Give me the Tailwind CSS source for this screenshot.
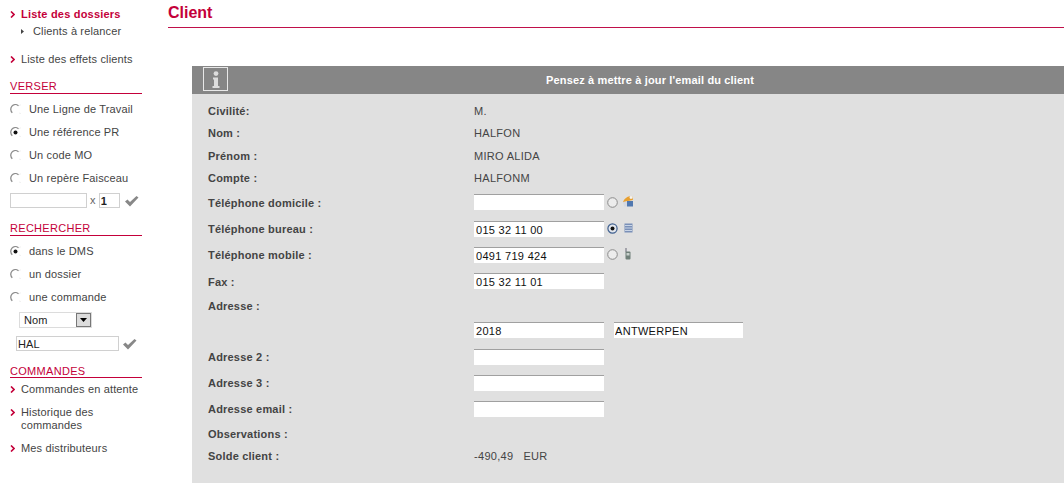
<!DOCTYPE html>
<html lang="fr">
<head>
    <meta charset="UTF-8">
    <title>Client</title>
    <script src="https://cdn.jsdelivr.net/npm/@tailwindcss/browser@4"></script>
</head>
<body class="bg-white h-[488px] overflow-hidden font-['Liberation_Sans',Arial,sans-serif] text-[11px] leading-[13px] text-[#444]">
<div class="flex">
    <!-- Sidebar -->
    <aside class="w-[192px] shrink-0 pl-[10px] pr-[50px] tracking-[0.15px]">
        <div class="flex items-center h-[13px] mt-[8px] font-bold tracking-[0.2px] text-[#c4003a]">
            <svg class="w-[5px] h-[7px] mr-[6px]" viewBox="0 0 5 7"><path d="M1 .5 4 3.5 1 6.5" fill="none" stroke="#c4003a" stroke-width="1.6"/></svg>
            Liste des dossiers
        </div>
        <div class="flex items-center h-[13px] mt-[4px] pl-[11px]">
            <svg class="w-[3px] h-[5px] mr-[9px]" viewBox="0 0 3 5"><path d="M0 0 3 2.5 0 5z" fill="#444"/></svg>
            Clients à relancer
        </div>
        <div class="flex items-center h-[13px] mt-[15px]">
            <svg class="w-[5px] h-[7px] mr-[6px]" viewBox="0 0 5 7"><path d="M1 .5 4 3.5 1 6.5" fill="none" stroke="#c4003a" stroke-width="1.6"/></svg>
            Liste des effets clients
        </div>

        <h2 class="mt-[14px] h-[14px] border-b border-[#c4003a] text-[#c4003a] tracking-[0.3px]">VERSER</h2>
        <div class="flex items-center h-[23px] mt-[4px]"><svg class="w-[11px] h-[11px] mr-[8px] mb-[1px]" viewBox="0 0 11 11"><path d="M8.5 1.8A4.5 4.5 0 1 1 9 9" fill="none" stroke="#f0f0f0"/><path d="M8.5 1.8A4.5 4.5 0 0 0 2.3 8.7" fill="none" stroke="#8c8c8c" stroke-width="1.3"/></svg>Une Ligne de Travail</div>
        <div class="flex items-center h-[23px]"><svg class="w-[11px] h-[11px] mr-[8px] mb-[1px]" viewBox="0 0 11 11"><path d="M8.5 1.8A4.5 4.5 0 1 1 9 9" fill="none" stroke="#f0f0f0"/><path d="M8.5 1.8A4.5 4.5 0 0 0 2.3 8.7" fill="none" stroke="#8c8c8c" stroke-width="1.3"/><circle cx="5.5" cy="5.5" r="2" fill="#111"/></svg>Une référence PR</div>
        <div class="flex items-center h-[23px]"><svg class="w-[11px] h-[11px] mr-[8px] mb-[1px]" viewBox="0 0 11 11"><path d="M8.5 1.8A4.5 4.5 0 1 1 9 9" fill="none" stroke="#f0f0f0"/><path d="M8.5 1.8A4.5 4.5 0 0 0 2.3 8.7" fill="none" stroke="#8c8c8c" stroke-width="1.3"/></svg>Un code MO</div>
        <div class="flex items-center h-[23px]"><svg class="w-[11px] h-[11px] mr-[8px] mb-[1px]" viewBox="0 0 11 11"><path d="M8.5 1.8A4.5 4.5 0 1 1 9 9" fill="none" stroke="#f0f0f0"/><path d="M8.5 1.8A4.5 4.5 0 0 0 2.3 8.7" fill="none" stroke="#8c8c8c" stroke-width="1.3"/></svg>Un repère Faisceau</div>
        <div class="flex items-center h-[15px] mt-[3px]">
            <input class="w-[77px] h-[15px] border border-[#d0d0d0] bg-white outline-none">
            <span class="ml-[3px] mr-[3px] text-[#666]">x</span>
            <input value="1" class="w-[21px] h-[15px] border border-[#d0d0d0] bg-white pl-[1px] text-[11px] font-bold text-[#222] outline-none">
            <svg class="w-[15px] h-[12px] ml-[4px]" viewBox="0 0 15 12"><path d="M1 6.5 3.5 4.5 6 7 12.5 1 14.5 2.5 6 11.5z" fill="#888"/></svg>
        </div>

        <h2 class="mt-[14px] h-[14px] border-b border-[#c4003a] text-[#c4003a] tracking-[0.3px]">RECHERCHER</h2>
        <div class="flex items-center h-[23px] mt-[4px]"><svg class="w-[11px] h-[11px] mr-[8px] mb-[1px]" viewBox="0 0 11 11"><path d="M8.5 1.8A4.5 4.5 0 1 1 9 9" fill="none" stroke="#f0f0f0"/><path d="M8.5 1.8A4.5 4.5 0 0 0 2.3 8.7" fill="none" stroke="#8c8c8c" stroke-width="1.3"/><circle cx="5.5" cy="5.5" r="2" fill="#111"/></svg>dans le DMS</div>
        <div class="flex items-center h-[23px]"><svg class="w-[11px] h-[11px] mr-[8px] mb-[1px]" viewBox="0 0 11 11"><path d="M8.5 1.8A4.5 4.5 0 1 1 9 9" fill="none" stroke="#f0f0f0"/><path d="M8.5 1.8A4.5 4.5 0 0 0 2.3 8.7" fill="none" stroke="#8c8c8c" stroke-width="1.3"/></svg>un dossier</div>
        <div class="flex items-center h-[23px]"><svg class="w-[11px] h-[11px] mr-[8px] mb-[1px]" viewBox="0 0 11 11"><path d="M8.5 1.8A4.5 4.5 0 1 1 9 9" fill="none" stroke="#f0f0f0"/><path d="M8.5 1.8A4.5 4.5 0 0 0 2.3 8.7" fill="none" stroke="#8c8c8c" stroke-width="1.3"/></svg>une commande</div>
        <div class="flex items-center justify-between w-[73px] h-[16px] ml-[9px] mt-[3px] border border-[#dcdcdc] pl-[4px] text-[#222]">
            Nom
            <span class="flex items-center justify-center w-[15px] h-[14px] bg-[#dcdcdc] border border-[#777]"><svg class="w-[7px] h-[4px]" viewBox="0 0 7 4"><path d="M0 0H7L3.5 4z" fill="#000"/></svg></span>
        </div>
        <div class="flex items-center h-[15px] mt-[8px] ml-[6px]">
            <input value="HAL" class="w-[103px] h-[15px] border border-[#d0d0d0] bg-white pl-[1px] text-[11px] text-[#222] outline-none">
            <svg class="w-[15px] h-[12px] ml-[3px]" viewBox="0 0 15 12"><path d="M1 6.5 3.5 4.5 6 7 12.5 1 14.5 2.5 6 11.5z" fill="#888"/></svg>
        </div>

        <h2 class="mt-[14px] h-[13px] border-b border-[#c4003a] text-[#c4003a] tracking-[0.3px]">COMMANDES</h2>
        <div class="flex items-center h-[13px] mt-[5px]">
            <svg class="w-[5px] h-[7px] mr-[6px]" viewBox="0 0 5 7"><path d="M1 .5 4 3.5 1 6.5" fill="none" stroke="#c4003a" stroke-width="1.6"/></svg>
            Commandes en attente
        </div>
        <div class="flex mt-[10px]">
            <svg class="w-[5px] h-[7px] mr-[6px] mt-[3px]" viewBox="0 0 5 7"><path d="M1 .5 4 3.5 1 6.5" fill="none" stroke="#c4003a" stroke-width="1.6"/></svg>
            <span>Historique des<br>commandes</span>
        </div>
        <div class="flex items-center h-[13px] mt-[10px]">
            <svg class="w-[5px] h-[7px] mr-[6px]" viewBox="0 0 5 7"><path d="M1 .5 4 3.5 1 6.5" fill="none" stroke="#c4003a" stroke-width="1.6"/></svg>
            Mes distributeurs
        </div>
    </aside>

    <!-- Main -->
    <main class="flex-1 tracking-[0.3px]">
        <h1 class="ml-[-24px] h-[28px] pt-[4px] border-b border-[#c0104a] text-[16px] leading-[18px] tracking-normal font-bold text-[#c4003a]">Client</h1>
        <section class="mt-[38px] h-[417px] bg-[#e0e0e0]">
            <div class="relative flex items-center justify-center h-[28px] pl-[44px] bg-[#868686] font-bold tracking-[0.15px] text-white">
                <span class="absolute left-[11px] top-[1px] flex items-center justify-center w-[25px] h-[24px] border border-[#e8e8e8]">
                    <svg class="w-[8px] h-[17px]" viewBox="0 0 8 17"><circle cx="4" cy="2.6" r="2.4" fill="#ddd"/><path d="M1 6.5H6V15H7.5V17H.5V15H2V8.5H1z" fill="#ddd"/></svg>
                </span>
                Pensez à mettre à jour l'email du client
            </div>
            <div class="pt-[6px] pl-[16px]">
                <div class="flex items-center h-[22px]"><b class="w-[266px] shrink-0 tracking-[0.2px]">Civilité:</b>M.</div>
                <div class="flex items-center h-[22px]"><b class="w-[266px] shrink-0 tracking-[0.2px]">Nom :</b>HALFON</div>
                <div class="flex items-center h-[24px]"><b class="w-[266px] shrink-0 tracking-[0.2px]">Prénom :</b>MIRO ALIDA</div>
                <div class="flex items-center h-[20px]"><b class="w-[266px] shrink-0 tracking-[0.2px]">Compte :</b>HALFONM</div>
                <div class="flex items-center h-[30px]">
                    <b class="w-[266px] shrink-0 tracking-[0.2px]">Téléphone domicile :</b>
                    <input class="w-[130px] h-[16px] mb-[2px] border-t border-[#a0a0a0] bg-white pl-[2px] text-[11px] text-[#111] outline-none">
                    <svg class="w-[11px] h-[11px] ml-[3px] mb-[2px]" viewBox="0 0 11 11"><circle cx="5.5" cy="5.5" r="4.8" fill="#ececec" stroke="#8a8a8a"/></svg>
                    <svg class="w-[12px] h-[12px] ml-[4px] mb-[4px]" viewBox="0 0 12 12"><path d="M1 7C2 4 5 1 10 1L11 5 6 6 4 8z" fill="#e8a030"/><circle cx="9" cy="2.5" r="1.4" fill="#f4f4f4"/><path d="M1 7 5 6V11.5H2z" fill="#d4d8e0"/><rect x="5" y="6" width="6" height="5.5" fill="#5078b0"/></svg>
                </div>
                <div class="flex items-center h-[22px]">
                    <b class="w-[266px] shrink-0 tracking-[0.2px]">Téléphone bureau :</b>
                    <input value="015 32 11 00" class="w-[130px] h-[16px] border-t border-[#a0a0a0] bg-white pl-[2px] text-[11px] text-[#111] outline-none">
                    <svg class="w-[11px] h-[11px] ml-[3px] mb-[2px]" viewBox="0 0 11 11"><circle cx="5.5" cy="5.5" r="4.6" fill="#e4e8ee" stroke="#3f5f8f" stroke-width="1.2"/><circle cx="5.5" cy="5.5" r="2" fill="#111"/></svg>
                    <svg class="w-[9px] h-[10px] ml-[6px] mb-[3px]" viewBox="0 0 9 10"><rect x="0.5" y="0.5" width="8" height="9" fill="#7a90b8"/><path d="M1 2.5H8M1 5H8M1 7.5H8" stroke="#c8d4e6"/></svg>
                </div>
                <div class="flex items-center h-[30px]">
                    <b class="w-[266px] shrink-0 tracking-[0.2px]">Téléphone mobile :</b>
                    <input value="0491 719 424" class="w-[130px] h-[16px] border-t border-[#a0a0a0] bg-white pl-[2px] text-[11px] text-[#111] outline-none">
                    <svg class="w-[11px] h-[11px] ml-[3px] mb-[2px]" viewBox="0 0 11 11"><circle cx="5.5" cy="5.5" r="4.8" fill="#ececec" stroke="#8a8a8a"/></svg>
                    <svg class="w-[6px] h-[12px] ml-[7px] mb-[2px]" viewBox="0 0 6 12"><path d="M1 0V4" stroke="#667"/><rect x="0.5" y="3.5" width="5" height="8" rx="1" fill="#6f7f78"/><rect x="1.5" y="5" width="3" height="2.5" fill="#c8d0cc"/></svg>
                </div>
                <div class="flex items-center h-[24px]">
                    <b class="w-[266px] shrink-0 tracking-[0.2px]">Fax :</b>
                    <input value="015 32 11 01" class="w-[130px] h-[16px] mb-[2px] border-t border-[#a0a0a0] bg-white pl-[2px] text-[11px] text-[#111] outline-none">
                </div>
                <div class="flex items-center h-[24px]"><b class="tracking-[0.2px]">Adresse :</b></div>
                <div class="flex items-center h-[24px] pl-[266px]">
                    <input value="2018" class="w-[130px] h-[16px] border-t border-[#a0a0a0] bg-white pl-[2px] text-[11px] text-[#111] outline-none">
                    <input value="ANTWERPEN" class="w-[129px] h-[16px] ml-[10px] border-t border-[#a0a0a0] bg-white pl-[1px] text-[11px] text-[#111] outline-none">
                </div>
                <div class="flex items-center h-[30px]">
                    <b class="w-[266px] shrink-0 tracking-[0.2px]">Adresse 2 :</b>
                    <input class="w-[130px] h-[16px] border-t border-[#a0a0a0] bg-white outline-none">
                </div>
                <div class="flex items-center h-[22px]">
                    <b class="w-[266px] shrink-0 tracking-[0.2px]">Adresse 3 :</b>
                    <input class="w-[130px] h-[16px] border-t border-[#a0a0a0] bg-white outline-none">
                </div>
                <div class="flex items-center h-[30px]">
                    <b class="w-[266px] shrink-0 tracking-[0.2px]">Adresse email :</b>
                    <input class="w-[130px] h-[16px] border-t border-[#a0a0a0] bg-white outline-none">
                </div>
                <div class="flex items-center h-[20px]"><b class="tracking-[0.2px]">Observations :</b></div>
                <div class="flex items-center h-[24px]"><b class="w-[266px] shrink-0 tracking-[0.2px]">Solde client :</b><span class="whitespace-pre">-490,49   EUR</span></div>
            </div>
        </section>
    </main>
</div>
</body>
</html>
